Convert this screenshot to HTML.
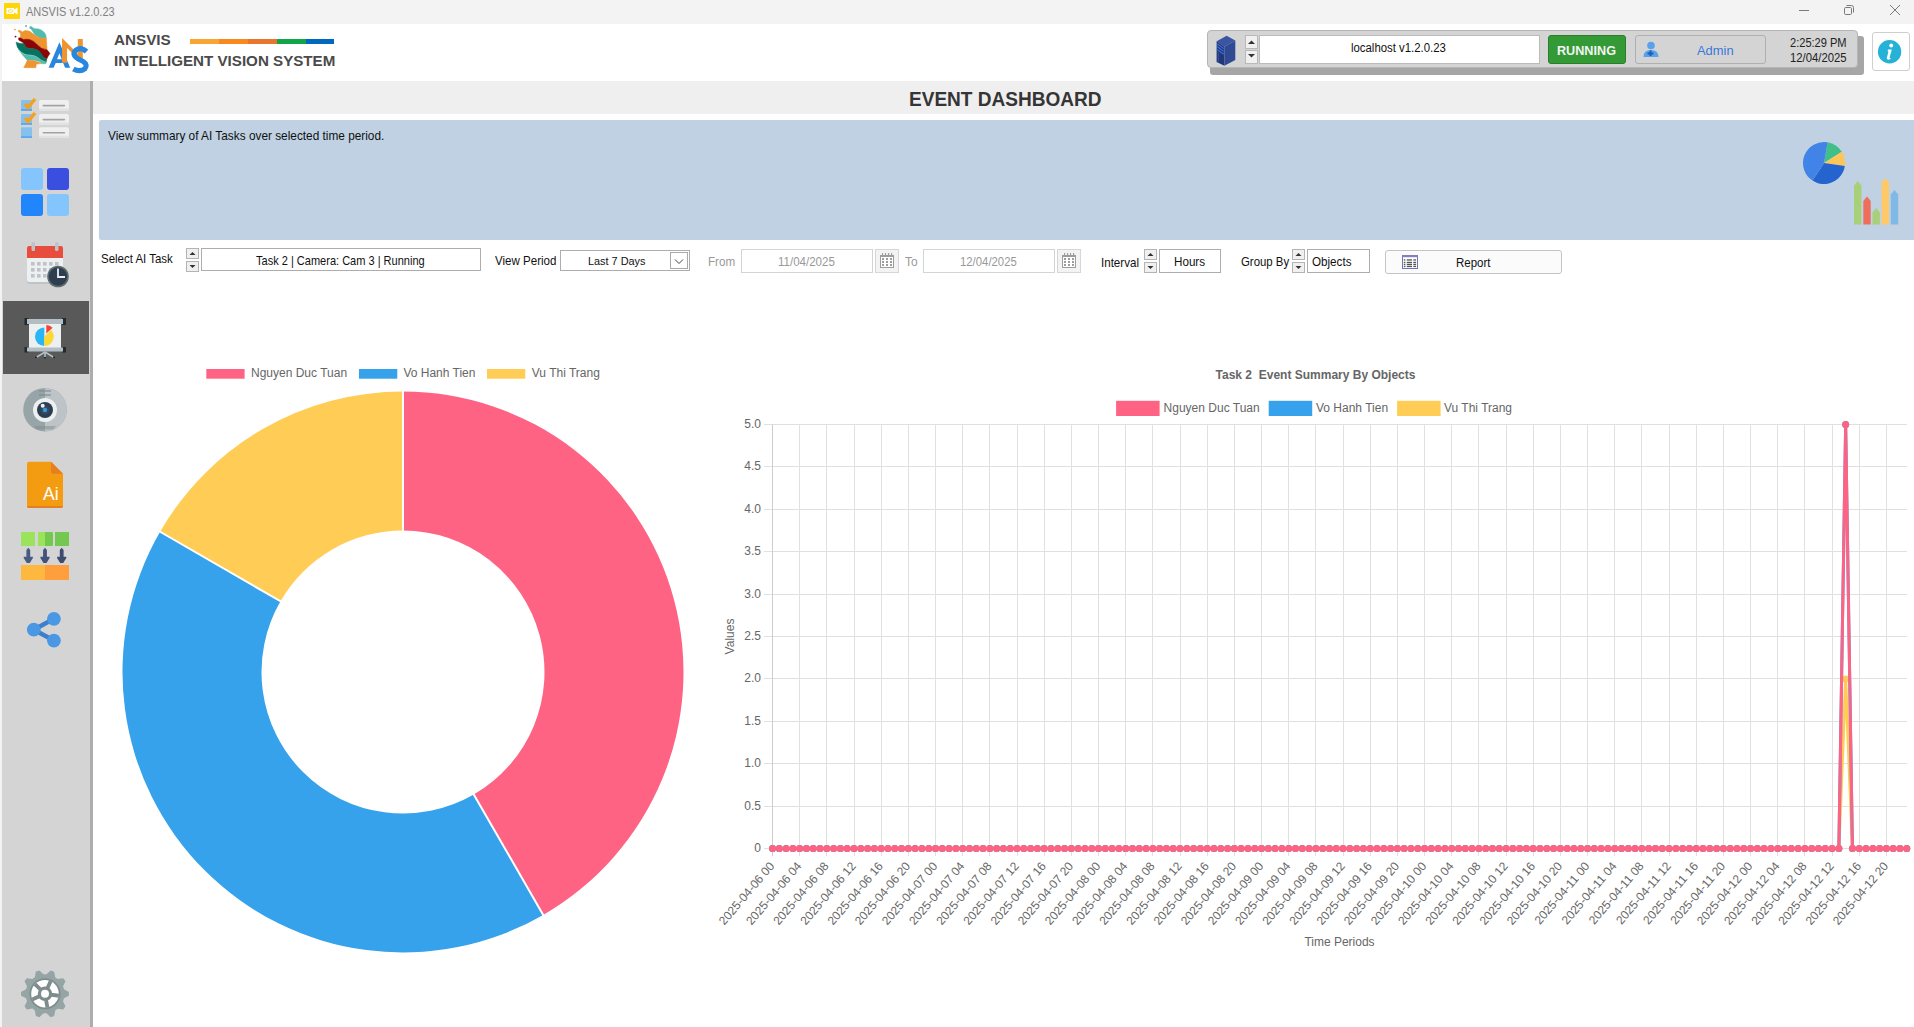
<!DOCTYPE html><html><head><meta charset="utf-8"><style>
html,body{margin:0;padding:0;width:1914px;height:1027px;overflow:hidden;background:#fff;font-family:"Liberation Sans", sans-serif;}
.a{position:absolute;}
.t{position:absolute;white-space:nowrap;line-height:1;}
</style></head><body>
<div class="a" style="left:0;top:0;width:1914px;height:1027px;background:#f3f3f3"></div>
<div class="a" style="left:4px;top:3px;width:16px;height:16px;background:#fdd60a;border-radius:1px"></div>
<svg class="a" style="left:4px;top:3px" width="16" height="16" viewBox="0 0 16 16"><path d="M2.5,5 L10,5 L10,6.5 L13.5,4.5 L13.5,11.5 L10,9.5 L10,11 L2.5,11 Z" fill="#fff"/><ellipse cx="6.5" cy="8" rx="2.5" ry="1.3" fill="none" stroke="#fdd60a" stroke-width="0.8"/></svg>
<div class="t" style="left:26.20px;top:5.94px;font-size:12.94px;color:#808080;transform-origin:0 0;transform:scaleX(0.8498);">ANSVIS v1.2.0.23</div>
<svg class="a" style="left:1790px;top:0" width="124" height="24" viewBox="0 0 124 24">
<line x1="9" y1="10.5" x2="19" y2="10.5" stroke="#7a7a7a" stroke-width="1"/>
<rect x="54.5" y="7.5" width="7" height="7" rx="1.2" fill="none" stroke="#7a7a7a" stroke-width="1"/><path d="M56.5,5.5 H61.5 Q63.5,5.5 63.5,7.5 V12.5" fill="none" stroke="#7a7a7a" stroke-width="1"/>
<path d="M100,5 L110,15 M110,5 L100,15" stroke="#7a7a7a" stroke-width="1"/>
</svg>
<div class="a" style="left:2px;top:24px;width:1912px;height:57px;background:#fff"></div>
<svg class="a" style="left:10px;top:24px" width="85" height="54" viewBox="0 0 1617 1027">
<path d="M380,60 Q420,50 470,90 Q610,80 680,200 L690,270 Q570,290 470,200 Z" fill="#52bbad" stroke="#52bbad" stroke-width="10"/>
<path d="M150,130 Q185,105 235,150 Q330,85 445,190 Q560,290 690,265 L705,485 Q600,470 520,390 Q430,290 300,300 L180,280 Q240,200 150,130 Z" fill="#ee952f" stroke="#ee952f" stroke-width="10"/>
<path d="M165,265 Q200,255 255,295 Q400,265 505,380 Q590,480 705,490 L760,560 L725,615 L700,665 Q620,645 580,560 Q520,460 380,465 Q280,465 260,360 L165,305 Z" fill="#8a0406" stroke="#8a0406" stroke-width="10"/>
<path d="M115,345 Q200,385 262,368 Q300,468 400,472 Q540,462 592,560 Q640,652 700,672 L690,722 Q600,702 540,642 Q470,582 320,582 Q200,542 140,440 Z" fill="#087261" stroke="#087261" stroke-width="10"/>
<path d="M150,470 Q225,555 300,590 Q470,592 540,650 Q600,712 690,722 L680,755 L620,757 Q560,702 480,692 Q380,682 330,692 Q250,610 150,470 Z" fill="#52bbad" stroke="#52bbad" stroke-width="10"/>
<path d="M330,690 Q450,680 605,752 L500,762 L492,830 L262,830 Z" fill="#ee952f" stroke="#ee952f" stroke-width="10"/>
<circle cx="95" cy="105" r="16" fill="#ee952f"/><circle cx="305" cy="38" r="19" fill="#52bbad"/><circle cx="105" cy="240" r="18" fill="#8a0406"/><circle cx="395" cy="70" r="25" fill="#52bbad"/>
<path d="M735,830 L940,345 L1145,830 L1050,830 L1010,740 L870,740 L830,830 Z M895,672 L985,672 L940,555 Z" fill="#2886de" fill-rule="evenodd"/>
<path d="M990,735 L990,265 L1290,565 L1290,285 L1385,285 L1385,660 L1290,660 L1085,455 L1085,735 Z" fill="#ee952f"/>
<path d="M1455,525 Q1350,430 1255,495 Q1165,580 1285,655 L1395,715 Q1485,775 1425,850 Q1330,925 1205,855" fill="none" stroke="#2886de" stroke-width="98"/>
</svg>
<div class="t" style="left:113.70px;top:32.40px;font-size:15.12px;color:#4a4a4a;font-weight:bold;transform-origin:0 0;transform:scaleX(1.0094);">ANSVIS</div>
<div class="t" style="left:113.70px;top:53.47px;font-size:15.26px;color:#4a4a4a;font-weight:bold;transform-origin:0 0;transform:scaleX(0.9932);">INTELLIGENT VISION SYSTEM</div>
<div class="a" style="left:190px;top:39px;width:29px;height:5px;background:#f9a533"></div>
<div class="a" style="left:219px;top:39px;width:29px;height:5px;background:#f7891f"></div>
<div class="a" style="left:248px;top:39px;width:29px;height:5px;background:#e8762e"></div>
<div class="a" style="left:277px;top:39px;width:29px;height:5px;background:#11a64a"></div>
<div class="a" style="left:306px;top:39px;width:28px;height:5px;background:#0069bf"></div>
<div class="a" style="left:1210px;top:36px;width:654px;height:39px;background:#a6a6a6;border-radius:3px"></div>
<div class="a" style="left:1207px;top:30px;width:649px;height:36px;background:#d4d4d4;border:1px solid #b5b5b5;border-radius:4px"></div>
<svg class="a" style="left:1214px;top:34px" width="24" height="34" viewBox="0 0 24 34">
<path d="M12.7,1.8 L21.3,6.5 L10.4,12.7 L2.6,7.3 Z" fill="#3a56a2"/><path d="M2.6,7.3 L10.4,12.7 L10.4,31.8 L2.6,27.9 Z" fill="#213779"/><path d="M10.4,12.7 L21.3,6.5 L21.3,26 L10.4,31.8 Z" fill="#2f4a92"/>
<path d="M3.2,10 L9.8,14.6 M3.2,12.8 L9.8,17.4 M3.2,15.6 L9.8,20.2" stroke="#3f6fe0" stroke-width="1.1"/><path d="M4.3,18 V28" stroke="#3e5aa8" stroke-width="0.8"/>
</svg>
<div class="a" style="left:1245px;top:35px;width:11px;height:12px;background:#f0f0f0;border:1px solid #b9b9b9"></div>
<div class="a" style="left:1245px;top:50px;width:11px;height:12px;background:#f0f0f0;border:1px solid #b9b9b9"></div>
<svg class="a" style="left:1245px;top:35px" width="13" height="29"><path d="M3,9 L6.5,5.5 L10,9 Z" fill="#333"/><path d="M3,19 L6.5,22.5 L10,19 Z" fill="#333"/></svg>
<div class="a" style="left:1259px;top:35px;width:279px;height:27px;background:#fff;border:1px solid #bbb"></div>
<div class="t" style="left:1351.30px;top:40.92px;font-size:13.08px;color:#111;transform-origin:0 0;transform:scaleX(0.8699);">localhost v1.2.0.23</div>
<div class="a" style="left:1548px;top:35px;width:76px;height:27px;background:#339a35;border:1px solid #2a7d2c;border-radius:3px"></div>
<div class="t" style="left:1556.60px;top:44.23px;font-size:13.66px;color:#f4f4f4;font-weight:bold;transform-origin:0 0;transform:scaleX(0.9252);">RUNNING</div>
<div class="a" style="left:1635px;top:35px;width:129px;height:27px;background:#d4d4d4;border:1px solid #b0b0b0;border-radius:3px"></div>
<svg class="a" style="left:1642px;top:41px" width="18" height="17" viewBox="0 0 18 17"><circle cx="9" cy="4.5" r="3.8" fill="#5aa0ec"/><path d="M1.5,16 Q1.5,9 9,9 Q16.5,9 16.5,16 Z" fill="#5aa0ec"/><path d="M5.5,12.5 H11.5 M8.5,9.5 V15" stroke="#1a5fb4" stroke-width="2"/></svg>
<div class="t" style="left:1697.20px;top:43.93px;font-size:13.66px;color:#3a78d8;transform-origin:0 0;transform:scaleX(0.9449);">Admin</div>
<div class="t" style="left:1790.00px;top:37.19px;font-size:12.65px;color:#222;transform-origin:0 0;transform:scaleX(0.8751);">2:25:29 PM</div>
<div class="t" style="left:1790.00px;top:51.77px;font-size:12.79px;color:#222;transform-origin:0 0;transform:scaleX(0.8841);">12/04/2025</div>
<div class="a" style="left:1872px;top:32px;width:36px;height:37px;background:#fff;border:1px solid #cfcfcf;border-radius:3px"></div>
<svg class="a" style="left:1877px;top:39px" width="26" height="26" viewBox="0 0 26 26"><circle cx="12.6" cy="12.8" r="11.7" fill="#26b1d6"/><circle cx="14.2" cy="6.5" r="1.9" fill="#fff"/><path d="M11,10.5 L14.8,10.5 L12.6,18.5 Q12.4,19.6 13.6,19 L14.2,19 Q12.5,21.3 10.6,20.6 Q9.4,20 9.9,18.4 L11.5,12.4 L10.6,12.2 Z" fill="#fff"/></svg>
<div class="a" style="left:2px;top:81px;width:88px;height:946px;background:#d4d4d4"></div>
<div class="a" style="left:90px;top:81px;width:3px;height:946px;background:#adadad"></div>
<div class="a" style="left:3px;top:301px;width:86px;height:73px;background:#595959"></div>
<svg class="a" style="left:0;top:81px" width="90" height="946" viewBox="0 81 90 946"><rect x="21" y="100" width="11" height="10.8" rx="1" fill="#85c1ef"/><rect x="21" y="109" width="11" height="1.8" fill="#5ca7ea"/><rect x="39" y="100" width="30" height="10.8" rx="2" fill="#efefef"/><rect x="39" y="108.5" width="30" height="2.3" fill="#e2e2e2"/><rect x="42.5" y="104.8" width="22.7" height="1.6" rx="0.8" fill="#a3a3a3"/><path d="M25,104 L28.2,107.4 L35,99" fill="none" stroke="#f5a11d" stroke-width="3.4" stroke-linejoin="miter"/><rect x="21" y="114" width="11" height="10.8" rx="1" fill="#85c1ef"/><rect x="21" y="123" width="11" height="1.8" fill="#5ca7ea"/><rect x="39" y="114" width="30" height="10.8" rx="2" fill="#efefef"/><rect x="39" y="122.5" width="30" height="2.3" fill="#e2e2e2"/><rect x="42.5" y="118.8" width="22.7" height="1.6" rx="0.8" fill="#a3a3a3"/><path d="M25,118 L28.2,121.4 L35,113" fill="none" stroke="#f5a11d" stroke-width="3.4" stroke-linejoin="miter"/><rect x="21" y="127.2" width="11" height="10.8" rx="1" fill="#85c1ef"/><rect x="21" y="136.2" width="11" height="1.8" fill="#5ca7ea"/><rect x="39" y="127.2" width="30" height="10.8" rx="2" fill="#efefef"/><rect x="39" y="135.7" width="30" height="2.3" fill="#e2e2e2"/><rect x="42.5" y="132.0" width="22.7" height="1.6" rx="0.8" fill="#a3a3a3"/><rect x="21" y="168" width="22" height="22" rx="3" fill="#84c5fd"/><rect x="47" y="168" width="22" height="22" rx="3" fill="#3a4fe0"/><rect x="21" y="194" width="22" height="22" rx="3" fill="#2185fc"/><rect x="47" y="194" width="22" height="22" rx="3" fill="#84c5fd"/><rect x="27" y="246" width="36" height="38" rx="2" fill="#bdc3c7"/><rect x="27" y="246" width="36" height="36" rx="2" fill="#ecf0f1"/><path d="M27,258 V248 Q27,246 29,246 H61 Q63,246 63,248 V258 Z" fill="#e74c3c"/><rect x="31.5" y="242" width="3.5" height="9" rx="1.5" fill="#bdc3c7"/><rect x="55" y="242" width="3.5" height="9" rx="1.5" fill="#bdc3c7"/><rect x="31" y="262" width="3.6" height="3.6" fill="#bdc3c7"/><rect x="37" y="262" width="3.6" height="3.6" fill="#bdc3c7"/><rect x="43" y="262" width="3.6" height="3.6" fill="#bdc3c7"/><rect x="49" y="262" width="3.6" height="3.6" fill="#bdc3c7"/><rect x="55" y="262" width="3.6" height="3.6" fill="#bdc3c7"/><rect x="31" y="268" width="3.6" height="3.6" fill="#bdc3c7"/><rect x="37" y="268" width="3.6" height="3.6" fill="#bdc3c7"/><rect x="43" y="268" width="3.6" height="3.6" fill="#bdc3c7"/><rect x="49" y="268" width="3.6" height="3.6" fill="#bdc3c7"/><rect x="55" y="268" width="3.6" height="3.6" fill="#bdc3c7"/><rect x="31" y="274" width="3.6" height="3.6" fill="#bdc3c7"/><rect x="37" y="274" width="3.6" height="3.6" fill="#bdc3c7"/><rect x="43" y="274" width="3.6" height="3.6" fill="#bdc3c7"/><rect x="49" y="274" width="3.6" height="3.6" fill="#bdc3c7"/><rect x="55" y="274" width="3.6" height="3.6" fill="#bdc3c7"/><circle cx="58" cy="276.5" r="10.8" fill="#5f6b6e"/><circle cx="58" cy="276.5" r="9.2" fill="#2c3e50"/><path d="M58,268.5 V277 H65" fill="none" stroke="#ecf0f1" stroke-width="1.8"/><rect x="24.5" y="318" width="4" height="7" fill="#1f2a33"/><rect x="62" y="318" width="4" height="7" fill="#1f2a33"/><rect x="24.5" y="347" width="4" height="5.5" fill="#1f2a33"/><rect x="62" y="347" width="4" height="5.5" fill="#1f2a33"/><rect x="29" y="324" width="32" height="24" fill="#ecf0f1"/><rect x="27" y="319" width="36" height="5" fill="#b2bec4"/><rect x="27" y="347.5" width="36" height="4" fill="#b2bec4"/><path d="M45,352 L45,358 M45,352 L36,357.5 M45,352 L54,357.5" stroke="#b2bec4" stroke-width="1.6"/><rect x="35" y="356.5" width="2" height="1.6" fill="#1f2a33"/><rect x="53" y="356.5" width="2" height="1.6" fill="#1f2a33"/><rect x="44" y="357" width="2" height="1.4" fill="#1f2a33"/><path d="M44.3,327.4 A9.3,9.3 0 0 0 44.3,346 Z" fill="#29b6f6"/><path d="M44.3,336.7 L50.9,330.1 A9.3,9.3 0 0 1 44.3,346 Z" fill="#fdd835"/><path d="M46.3,333.5 L46.3,325 A9.3,9.3 0 0 1 52.6,327.7 Z" fill="#f44336"/><circle cx="45" cy="409.7" r="21.8" fill="#98a5a8"/><path d="M45,387.9 A21.8,21.8 0 0 1 45,431.5 Z" fill="#bdc3c7"/><rect x="39" y="390" width="12" height="1.9" fill="#7f8c8d" opacity="0.6"/><rect x="39" y="394" width="12" height="1.9" fill="#7f8c8d" opacity="0.6"/><path d="M34,426 H56 L53,429.5 H37 Z" fill="#7f8c8d" opacity="0.5"/><circle cx="45" cy="410" r="12" fill="#ecf0f1"/><circle cx="45" cy="410" r="8" fill="#2c3e50"/><circle cx="45" cy="410" r="4.5" fill="#34495e"/><circle cx="45" cy="410" r="2.2" fill="#3498db"/><circle cx="42.7" cy="405.7" r="2" fill="#ecf0f1"/><path d="M29,461.7 H51 L63,473.7 V506 Q63,508 61,508 H29 Q27,508 27,506 V463.7 Q27,461.7 29,461.7 Z" fill="#f39c12"/><path d="M27,506 H63 Q63,508 61,508 H29 Q27,508 27,506 Z" fill="#e67e22"/><path d="M51,461.7 L63,473.7 H53 Q51,473.7 51,471.7 Z" fill="#e67e22"/><text x="43" y="499.6" font-family="Liberation Sans" font-size="17.5" fill="#fff">Ai</text><rect x="21" y="532" width="14" height="14" fill="#9be35a"/><rect x="38" y="532" width="15" height="14" fill="#9be35a"/><path d="M45,532 H51 Q53,532 53,534 V544 Q53,546 51,546 H45 Z" fill="#74c850"/><rect x="55" y="532" width="14" height="14" fill="#74c850"/><path d="M26.400000000000002,550 L28.3,547.8 L30.2,550 V556.8 H32.9 V558 L29.8,563 H26.8 L23.700000000000003,558 V556.8 H26.400000000000002 Z" fill="#4a5b80"/><path d="M43.1,550 L45,547.8 L46.9,550 V556.8 H49.6 V558 L46.5,563 H43.5 L40.4,558 V556.8 H43.1 Z" fill="#44527a"/><path d="M59.800000000000004,550 L61.7,547.8 L63.6,550 V556.8 H66.3 V558 L63.2,563 H60.2 L57.1,558 V556.8 H59.800000000000004 Z" fill="#3f4a70"/><rect x="21" y="565" width="24" height="15" fill="#ffb83f"/><rect x="45" y="565" width="24" height="15" fill="#ff9e3d"/><path d="M53.9,618.8 L33.8,629.7 L53.9,640.6" fill="none" stroke="#3c80cc" stroke-width="4.5"/><circle cx="53.9" cy="618.8" r="6.9" fill="#4a98e3"/><circle cx="33.8" cy="629.7" r="6.9" fill="#4a98e3"/><circle cx="53.9" cy="640.6" r="6.9" fill="#4a98e3"/><polygon points="45.00,969.80 48.75,970.10 51.03,975.25 53.85,976.43 59.11,974.38 61.97,976.83 60.78,982.34 62.37,984.95 67.83,986.38 68.70,990.05 64.50,993.80 64.26,996.85 67.83,1001.22 66.38,1004.70 60.78,1005.26 58.79,1007.59 59.11,1013.22 55.90,1015.18 51.03,1012.35 48.05,1013.06 45.00,1017.80 41.25,1017.50 38.97,1012.35 36.15,1011.17 30.89,1013.22 28.03,1010.77 29.22,1005.26 27.63,1002.65 22.17,1001.22 21.30,997.55 25.50,993.80 25.74,990.75 22.17,986.38 23.62,982.90 29.22,982.34 31.21,980.01 30.89,974.38 34.10,972.42 38.97,975.25 41.95,974.54" fill="#95a5a6" transform="rotate(13.5 45 993.8)"/><circle cx="45" cy="993.8" r="15.5" fill="#7f8c8d"/><circle cx="45" cy="993.8" r="13.8" fill="#fff"/><g stroke="#7f8c8d" stroke-width="3.8"><line x1="45" y1="993.8" x2="50.69" y2="981.01"/><line x1="45" y1="993.8" x2="58.86" y2="995.75"/><line x1="45" y1="993.8" x2="47.43" y2="1007.59"/><line x1="45" y1="993.8" x2="32.21" y2="999.49"/><line x1="45" y1="993.8" x2="34.93" y2="984.07"/></g><circle cx="45" cy="993.8" r="7.2" fill="#7f8c8d"/><circle cx="45" cy="993.8" r="4" fill="#fff"/></svg><div class="a" style="left:93px;top:81px;width:1821px;height:33px;background:#efefef"></div>
<div class="t" style="left:908.70px;top:89.30px;font-size:20.78px;color:#353535;font-weight:bold;transform-origin:0 0;transform:scaleX(0.9168);">EVENT DASHBOARD</div>
<div class="a" style="left:93px;top:114px;width:1821px;height:913px;background:#fff"></div>
<div class="a" style="left:99px;top:120px;width:1815px;height:120px;background:#bfd1e3;border-radius:2px 0 0 2px"></div>
<div class="t" style="left:108.20px;top:129.94px;font-size:12.94px;color:#111;transform-origin:0 0;transform:scaleX(0.9142);">View summary of AI Tasks over selected time period.</div>
<div class="t" style="left:101.00px;top:251.97px;font-size:13.37px;color:#111;transform-origin:0 0;transform:scaleX(0.8582);">Select AI Task</div><div class="a" style="left:186px;top:248px;width:11px;height:9px;background:#f0f0f0;border:1px solid #b4b4b4"></div><div class="a" style="left:186px;top:261px;width:11px;height:9px;background:#f0f0f0;border:1px solid #b4b4b4"></div><svg class="a" style="left:186px;top:248px" width="13" height="24"><path d="M3.5,7 L6.5,4 L9.5,7 Z" fill="#333"/><path d="M3.5,17 L6.5,20 L9.5,17 Z" fill="#333"/></svg><div class="a" style="left:201px;top:248px;width:278px;height:21px;background:#fff;border:1px solid #adadad"></div><div class="t" style="left:255.70px;top:254.88px;font-size:12.06px;color:#111;transform-origin:0 0;transform:scaleX(0.9148);">Task 2 | Camera: Cam 3 | Running</div><div class="t" style="left:494.90px;top:255.24px;font-size:12.35px;color:#111;transform-origin:0 0;transform:scaleX(0.9361);">View Period</div><div class="a" style="left:560px;top:250px;width:128px;height:19px;background:#fff;border:1px solid #adadad"></div><div class="t" style="left:587.50px;top:254.85px;font-size:11.63px;color:#111;transform-origin:0 0;transform:scaleX(0.9366);">Last 7 Days</div><div class="a" style="left:670px;top:252px;width:16px;height:15px;background:#fff;border:1px solid #aaa"></div><svg class="a" style="left:671px;top:253px" width="16" height="16"><path d="M4,6.5 L8,10.5 L12,6.5" fill="none" stroke="#444" stroke-width="1"/></svg><div class="t" style="left:708.20px;top:254.92px;font-size:13.08px;color:#999;transform-origin:0 0;transform:scaleX(0.8914);">From</div><div class="a" style="left:741px;top:249px;width:130px;height:22px;background:#fff;border:1px solid #d4d4d4"></div><div class="t" style="left:777.80px;top:254.92px;font-size:13.08px;color:#999;transform-origin:0 0;transform:scaleX(0.8807);">11/04/2025</div><div class="a" style="left:875px;top:249px;width:22px;height:22px;background:#f3f3f3;border:1px solid #d6d6d6"></div><svg class="a" style="left:880px;top:253px" width="15" height="16" viewBox="0 0 15 16"><rect x="0.5" y="2.5" width="13" height="12" fill="#fff" stroke="#9c9c9c"/><rect x="0" y="2" width="14" height="2" fill="#9c9c9c"/><rect x="2" y="0" width="1.1" height="2.5" fill="#9c9c9c"/><rect x="5" y="0" width="1.1" height="2.5" fill="#9c9c9c"/><rect x="8" y="0" width="1.1" height="2.5" fill="#9c9c9c"/><rect x="11" y="0" width="1.1" height="2.5" fill="#9c9c9c"/><rect x="2" y="5" width="2" height="2" fill="#9c9c9c"/><rect x="6" y="5" width="2" height="2" fill="#9c9c9c"/><rect x="10" y="5" width="2" height="2" fill="#9c9c9c"/><rect x="2" y="8" width="2" height="2" fill="#9c9c9c"/><rect x="6" y="8" width="2" height="2" fill="#9c9c9c"/><rect x="10" y="8" width="2" height="2" fill="#9c9c9c"/><rect x="2" y="11" width="2" height="2" fill="#9c9c9c"/><rect x="6" y="11" width="2" height="2" fill="#9c9c9c"/><rect x="10" y="11" width="2" height="2" fill="#9c9c9c"/></svg><div class="t" style="left:904.90px;top:255.61px;font-size:12.50px;color:#999;transform-origin:0 0;transform:scaleX(0.9555);">To</div><div class="a" style="left:923px;top:249px;width:130px;height:22px;background:#fff;border:1px solid #d4d4d4"></div><div class="t" style="left:959.80px;top:254.92px;font-size:13.08px;color:#999;transform-origin:0 0;transform:scaleX(0.8675);">12/04/2025</div><div class="a" style="left:1057px;top:249px;width:22px;height:22px;background:#f3f3f3;border:1px solid #d6d6d6"></div><svg class="a" style="left:1062px;top:253px" width="15" height="16" viewBox="0 0 15 16"><rect x="0.5" y="2.5" width="13" height="12" fill="#fff" stroke="#9c9c9c"/><rect x="0" y="2" width="14" height="2" fill="#9c9c9c"/><rect x="2" y="0" width="1.1" height="2.5" fill="#9c9c9c"/><rect x="5" y="0" width="1.1" height="2.5" fill="#9c9c9c"/><rect x="8" y="0" width="1.1" height="2.5" fill="#9c9c9c"/><rect x="11" y="0" width="1.1" height="2.5" fill="#9c9c9c"/><rect x="2" y="5" width="2" height="2" fill="#9c9c9c"/><rect x="6" y="5" width="2" height="2" fill="#9c9c9c"/><rect x="10" y="5" width="2" height="2" fill="#9c9c9c"/><rect x="2" y="8" width="2" height="2" fill="#9c9c9c"/><rect x="6" y="8" width="2" height="2" fill="#9c9c9c"/><rect x="10" y="8" width="2" height="2" fill="#9c9c9c"/><rect x="2" y="11" width="2" height="2" fill="#9c9c9c"/><rect x="6" y="11" width="2" height="2" fill="#9c9c9c"/><rect x="10" y="11" width="2" height="2" fill="#9c9c9c"/></svg><div class="t" style="left:1100.60px;top:255.77px;font-size:13.37px;color:#111;transform-origin:0 0;transform:scaleX(0.8664);">Interval</div><div class="a" style="left:1144px;top:249px;width:11px;height:9px;background:#f0f0f0;border:1px solid #b4b4b4"></div><div class="a" style="left:1144px;top:262px;width:11px;height:9px;background:#f0f0f0;border:1px solid #b4b4b4"></div><svg class="a" style="left:1144px;top:249px" width="13" height="24"><path d="M3.5,7 L6.5,4 L9.5,7 Z" fill="#333"/><path d="M3.5,17 L6.5,20 L9.5,17 Z" fill="#333"/></svg><div class="a" style="left:1159px;top:249px;width:60px;height:22px;background:#fff;border:1px solid #adadad"></div><div class="t" style="left:1173.60px;top:256.27px;font-size:12.79px;color:#111;transform-origin:0 0;transform:scaleX(0.9115);">Hours</div><div class="t" style="left:1240.60px;top:254.77px;font-size:13.37px;color:#111;transform-origin:0 0;transform:scaleX(0.8531);">Group By</div><div class="a" style="left:1292px;top:249px;width:11px;height:9px;background:#f0f0f0;border:1px solid #b4b4b4"></div><div class="a" style="left:1292px;top:262px;width:11px;height:9px;background:#f0f0f0;border:1px solid #b4b4b4"></div><svg class="a" style="left:1292px;top:249px" width="13" height="24"><path d="M3.5,7 L6.5,4 L9.5,7 Z" fill="#333"/><path d="M3.5,17 L6.5,20 L9.5,17 Z" fill="#333"/></svg><div class="a" style="left:1307px;top:249px;width:61px;height:22px;background:#fff;border:1px solid #adadad"></div><div class="t" style="left:1311.50px;top:256.27px;font-size:12.79px;color:#111;transform-origin:0 0;transform:scaleX(0.9110);">Objects</div><div class="a" style="left:1385px;top:250px;width:175px;height:22px;background:#fbfbfb;border:1px solid #c4c4c4;border-radius:3px"></div><svg class="a" style="left:1402px;top:255px" width="16" height="14" viewBox="0 0 16 14"><rect x="0.5" y="0.5" width="15" height="13" fill="#fff" stroke="#7474b4"/><rect x="0" y="0" width="16" height="2.2" fill="#8080c0"/><rect x="1.8" y="4.3" width="1.6" height="1.3" fill="#555"/><rect x="4.8" y="4.3" width="5.2" height="1.3" fill="#555"/><rect x="11.3" y="4.3" width="2.8" height="1.3" fill="#555"/><rect x="1.8" y="6.8" width="1.6" height="1.3" fill="#555"/><rect x="4.8" y="6.8" width="5.2" height="1.3" fill="#555"/><rect x="11.3" y="6.8" width="2.8" height="1.3" fill="#555"/><rect x="1.8" y="8.8" width="1.6" height="1.3" fill="#555"/><rect x="4.8" y="8.8" width="5.2" height="1.3" fill="#555"/><rect x="11.3" y="8.8" width="2.8" height="1.3" fill="#555"/><rect x="1.8" y="10.8" width="1.6" height="1.3" fill="#555"/><rect x="4.8" y="10.8" width="5.2" height="1.3" fill="#555"/><rect x="11.3" y="10.8" width="2.8" height="1.3" fill="#555"/></svg><div class="t" style="left:1455.50px;top:257.44px;font-size:12.35px;color:#111;transform-origin:0 0;transform:scaleX(0.9300);">Report</div><svg class="a" style="left:1790px;top:130px" width="124" height="105" viewBox="1790 130 124 105"><path d="M1824,163 L1827.65,142.32 A21,21 0 0 1 1841.81,151.87 Z" fill="#40c088"/><path d="M1824,163 L1841.81,151.87 A21,21 0 0 1 1844.80,165.92 Z" fill="#fec65a"/><path d="M1824,163 L1844.80,165.92 A21,21 0 0 1 1812.56,180.61 Z" fill="#2563cf"/><path d="M1824,163 L1812.56,180.61 A21,21 0 0 1 1827.65,142.32 Z" fill="#4283e8"/><path d="M1854,224.5 V185.5 L1857.7,181 L1861.4,185.5 V224.5 Z" fill="#a8d07a"/><path d="M1863.3,224.5 V201.0 L1867.0,196.5 L1870.7,201.0 V224.5 Z" fill="#ee6e5e"/><path d="M1872.5,224.5 V212.5 L1876.2,208 L1879.9,212.5 V224.5 Z" fill="#a8d07a"/><path d="M1881.6,224.5 V182.5 L1885.3,178 L1889.0,182.5 V224.5 Z" fill="#fec966"/><path d="M1890.8,224.5 V194.5 L1894.5,190 L1898.2,194.5 V224.5 Z" fill="#80b8e6"/></svg><svg class="a" style="left:93px;top:340px" width="620" height="640" viewBox="93 340 620 640"><path d="M403.00,391.50 A280.5,280.5 0 0 1 543.25,914.92 L473.75,794.54 A141.5,141.5 0 0 0 403.00,530.50 Z" fill="#ff6384"/><path d="M543.25,914.92 A280.5,280.5 0 0 1 160.08,531.75 L280.46,601.25 A141.5,141.5 0 0 0 473.75,794.54 Z" fill="#36a2eb"/><path d="M160.08,531.75 A280.5,280.5 0 0 1 403.00,391.50 L403.00,530.50 A141.5,141.5 0 0 0 280.46,601.25 Z" fill="#ffcd56"/><line x1="403.00" y1="532.50" x2="403.00" y2="389.50" stroke="#fff" stroke-width="2"/><line x1="472.75" y1="792.81" x2="544.25" y2="916.65" stroke="#fff" stroke-width="2"/><line x1="282.19" y1="602.25" x2="158.35" y2="530.75" stroke="#fff" stroke-width="2"/><rect x="206.3" y="369" width="38.3" height="9.7" fill="#ff6384"/><text x="251" y="377" font-family="Liberation Sans" font-size="12" fill="#666">Nguyen Duc Tuan</text><rect x="359" y="369" width="38.3" height="9.7" fill="#36a2eb"/><text x="403.4" y="377" font-family="Liberation Sans" font-size="12" fill="#666">Vo Hanh Tien</text><rect x="487" y="369" width="38.3" height="9.7" fill="#ffcd56"/><text x="531.8" y="377" font-family="Liberation Sans" font-size="12" fill="#666">Vu Thi Trang</text></svg><svg class="a" style="left:700px;top:340px" width="1214" height="640" viewBox="700 340 1214 640"><text x="1315.5" y="378.7" font-family="Liberation Sans" font-size="12" font-weight="bold" fill="#666" text-anchor="middle" style="white-space:pre">Task 2  Event Summary By Objects</text><rect x="1116.1" y="400.8" width="43.5" height="15.2" fill="#ff6384"/><text x="1163.6" y="411.7" font-family="Liberation Sans" font-size="12" fill="#666">Nguyen Duc Tuan</text><rect x="1268.7" y="400.8" width="43.5" height="15.2" fill="#36a2eb"/><text x="1316" y="411.7" font-family="Liberation Sans" font-size="12" fill="#666">Vo Hanh Tien</text><rect x="1397.1" y="400.8" width="43.5" height="15.2" fill="#ffcd56"/><text x="1444" y="411.7" font-family="Liberation Sans" font-size="12" fill="#666">Vu Thi Trang</text><path d="M764,848.50 H1907 M764,806.50 H1907 M764,763.50 H1907 M764,721.50 H1907 M764,678.50 H1907 M764,636.50 H1907 M764,594.50 H1907 M764,551.50 H1907 M764,509.50 H1907 M764,466.50 H1907 M764,424.50 H1907" stroke="#e0e0e0" stroke-width="1" fill="none"/><path d="M799.50,424.5 V856 M826.50,424.5 V856 M854.50,424.5 V856 M881.50,424.5 V856 M908.50,424.5 V856 M935.50,424.5 V856 M962.50,424.5 V856 M989.50,424.5 V856 M1017.50,424.5 V856 M1044.50,424.5 V856 M1071.50,424.5 V856 M1098.50,424.5 V856 M1125.50,424.5 V856 M1152.50,424.5 V856 M1180.50,424.5 V856 M1207.50,424.5 V856 M1234.50,424.5 V856 M1261.50,424.5 V856 M1288.50,424.5 V856 M1315.50,424.5 V856 M1343.50,424.5 V856 M1370.50,424.5 V856 M1397.50,424.5 V856 M1424.50,424.5 V856 M1451.50,424.5 V856 M1478.50,424.5 V856 M1506.50,424.5 V856 M1533.50,424.5 V856 M1560.50,424.5 V856 M1587.50,424.5 V856 M1614.50,424.5 V856 M1641.50,424.5 V856 M1669.50,424.5 V856 M1696.50,424.5 V856 M1723.50,424.5 V856 M1750.50,424.5 V856 M1777.50,424.5 V856 M1804.50,424.5 V856 M1832.50,424.5 V856 M1859.50,424.5 V856 M1886.50,424.5 V856" stroke="#e0e0e0" stroke-width="1" fill="none"/><path d="M772.5,424.5 V856" stroke="#cdcdcd" stroke-width="1" fill="none"/><text x="761" y="851.90" font-family="Liberation Sans" font-size="12" fill="#666" text-anchor="end">0</text><text x="761" y="809.50" font-family="Liberation Sans" font-size="12" fill="#666" text-anchor="end">0.5</text><text x="761" y="767.10" font-family="Liberation Sans" font-size="12" fill="#666" text-anchor="end">1.0</text><text x="761" y="724.70" font-family="Liberation Sans" font-size="12" fill="#666" text-anchor="end">1.5</text><text x="761" y="682.30" font-family="Liberation Sans" font-size="12" fill="#666" text-anchor="end">2.0</text><text x="761" y="639.90" font-family="Liberation Sans" font-size="12" fill="#666" text-anchor="end">2.5</text><text x="761" y="597.50" font-family="Liberation Sans" font-size="12" fill="#666" text-anchor="end">3.0</text><text x="761" y="555.10" font-family="Liberation Sans" font-size="12" fill="#666" text-anchor="end">3.5</text><text x="761" y="512.70" font-family="Liberation Sans" font-size="12" fill="#666" text-anchor="end">4.0</text><text x="761" y="470.30" font-family="Liberation Sans" font-size="12" fill="#666" text-anchor="end">4.5</text><text x="761" y="427.90" font-family="Liberation Sans" font-size="12" fill="#666" text-anchor="end">5.0</text><text transform="translate(734,636.5) rotate(-90)" font-family="Liberation Sans" font-size="12" fill="#666" text-anchor="middle">Values</text><text transform="translate(772.60,864.4) rotate(-49.5)" font-family="Liberation Sans" font-size="12" fill="#666" text-anchor="end" dominant-baseline="middle">2025-04-06 00</text><text transform="translate(799.77,864.4) rotate(-49.5)" font-family="Liberation Sans" font-size="12" fill="#666" text-anchor="end" dominant-baseline="middle">2025-04-06 04</text><text transform="translate(826.94,864.4) rotate(-49.5)" font-family="Liberation Sans" font-size="12" fill="#666" text-anchor="end" dominant-baseline="middle">2025-04-06 08</text><text transform="translate(854.10,864.4) rotate(-49.5)" font-family="Liberation Sans" font-size="12" fill="#666" text-anchor="end" dominant-baseline="middle">2025-04-06 12</text><text transform="translate(881.27,864.4) rotate(-49.5)" font-family="Liberation Sans" font-size="12" fill="#666" text-anchor="end" dominant-baseline="middle">2025-04-06 16</text><text transform="translate(908.44,864.4) rotate(-49.5)" font-family="Liberation Sans" font-size="12" fill="#666" text-anchor="end" dominant-baseline="middle">2025-04-06 20</text><text transform="translate(935.61,864.4) rotate(-49.5)" font-family="Liberation Sans" font-size="12" fill="#666" text-anchor="end" dominant-baseline="middle">2025-04-07 00</text><text transform="translate(962.78,864.4) rotate(-49.5)" font-family="Liberation Sans" font-size="12" fill="#666" text-anchor="end" dominant-baseline="middle">2025-04-07 04</text><text transform="translate(989.95,864.4) rotate(-49.5)" font-family="Liberation Sans" font-size="12" fill="#666" text-anchor="end" dominant-baseline="middle">2025-04-07 08</text><text transform="translate(1017.11,864.4) rotate(-49.5)" font-family="Liberation Sans" font-size="12" fill="#666" text-anchor="end" dominant-baseline="middle">2025-04-07 12</text><text transform="translate(1044.28,864.4) rotate(-49.5)" font-family="Liberation Sans" font-size="12" fill="#666" text-anchor="end" dominant-baseline="middle">2025-04-07 16</text><text transform="translate(1071.45,864.4) rotate(-49.5)" font-family="Liberation Sans" font-size="12" fill="#666" text-anchor="end" dominant-baseline="middle">2025-04-07 20</text><text transform="translate(1098.62,864.4) rotate(-49.5)" font-family="Liberation Sans" font-size="12" fill="#666" text-anchor="end" dominant-baseline="middle">2025-04-08 00</text><text transform="translate(1125.79,864.4) rotate(-49.5)" font-family="Liberation Sans" font-size="12" fill="#666" text-anchor="end" dominant-baseline="middle">2025-04-08 04</text><text transform="translate(1152.96,864.4) rotate(-49.5)" font-family="Liberation Sans" font-size="12" fill="#666" text-anchor="end" dominant-baseline="middle">2025-04-08 08</text><text transform="translate(1180.12,864.4) rotate(-49.5)" font-family="Liberation Sans" font-size="12" fill="#666" text-anchor="end" dominant-baseline="middle">2025-04-08 12</text><text transform="translate(1207.29,864.4) rotate(-49.5)" font-family="Liberation Sans" font-size="12" fill="#666" text-anchor="end" dominant-baseline="middle">2025-04-08 16</text><text transform="translate(1234.46,864.4) rotate(-49.5)" font-family="Liberation Sans" font-size="12" fill="#666" text-anchor="end" dominant-baseline="middle">2025-04-08 20</text><text transform="translate(1261.63,864.4) rotate(-49.5)" font-family="Liberation Sans" font-size="12" fill="#666" text-anchor="end" dominant-baseline="middle">2025-04-09 00</text><text transform="translate(1288.80,864.4) rotate(-49.5)" font-family="Liberation Sans" font-size="12" fill="#666" text-anchor="end" dominant-baseline="middle">2025-04-09 04</text><text transform="translate(1315.97,864.4) rotate(-49.5)" font-family="Liberation Sans" font-size="12" fill="#666" text-anchor="end" dominant-baseline="middle">2025-04-09 08</text><text transform="translate(1343.13,864.4) rotate(-49.5)" font-family="Liberation Sans" font-size="12" fill="#666" text-anchor="end" dominant-baseline="middle">2025-04-09 12</text><text transform="translate(1370.30,864.4) rotate(-49.5)" font-family="Liberation Sans" font-size="12" fill="#666" text-anchor="end" dominant-baseline="middle">2025-04-09 16</text><text transform="translate(1397.47,864.4) rotate(-49.5)" font-family="Liberation Sans" font-size="12" fill="#666" text-anchor="end" dominant-baseline="middle">2025-04-09 20</text><text transform="translate(1424.64,864.4) rotate(-49.5)" font-family="Liberation Sans" font-size="12" fill="#666" text-anchor="end" dominant-baseline="middle">2025-04-10 00</text><text transform="translate(1451.81,864.4) rotate(-49.5)" font-family="Liberation Sans" font-size="12" fill="#666" text-anchor="end" dominant-baseline="middle">2025-04-10 04</text><text transform="translate(1478.98,864.4) rotate(-49.5)" font-family="Liberation Sans" font-size="12" fill="#666" text-anchor="end" dominant-baseline="middle">2025-04-10 08</text><text transform="translate(1506.14,864.4) rotate(-49.5)" font-family="Liberation Sans" font-size="12" fill="#666" text-anchor="end" dominant-baseline="middle">2025-04-10 12</text><text transform="translate(1533.31,864.4) rotate(-49.5)" font-family="Liberation Sans" font-size="12" fill="#666" text-anchor="end" dominant-baseline="middle">2025-04-10 16</text><text transform="translate(1560.48,864.4) rotate(-49.5)" font-family="Liberation Sans" font-size="12" fill="#666" text-anchor="end" dominant-baseline="middle">2025-04-10 20</text><text transform="translate(1587.65,864.4) rotate(-49.5)" font-family="Liberation Sans" font-size="12" fill="#666" text-anchor="end" dominant-baseline="middle">2025-04-11 00</text><text transform="translate(1614.82,864.4) rotate(-49.5)" font-family="Liberation Sans" font-size="12" fill="#666" text-anchor="end" dominant-baseline="middle">2025-04-11 04</text><text transform="translate(1641.99,864.4) rotate(-49.5)" font-family="Liberation Sans" font-size="12" fill="#666" text-anchor="end" dominant-baseline="middle">2025-04-11 08</text><text transform="translate(1669.15,864.4) rotate(-49.5)" font-family="Liberation Sans" font-size="12" fill="#666" text-anchor="end" dominant-baseline="middle">2025-04-11 12</text><text transform="translate(1696.32,864.4) rotate(-49.5)" font-family="Liberation Sans" font-size="12" fill="#666" text-anchor="end" dominant-baseline="middle">2025-04-11 16</text><text transform="translate(1723.49,864.4) rotate(-49.5)" font-family="Liberation Sans" font-size="12" fill="#666" text-anchor="end" dominant-baseline="middle">2025-04-11 20</text><text transform="translate(1750.66,864.4) rotate(-49.5)" font-family="Liberation Sans" font-size="12" fill="#666" text-anchor="end" dominant-baseline="middle">2025-04-12 00</text><text transform="translate(1777.83,864.4) rotate(-49.5)" font-family="Liberation Sans" font-size="12" fill="#666" text-anchor="end" dominant-baseline="middle">2025-04-12 04</text><text transform="translate(1805.00,864.4) rotate(-49.5)" font-family="Liberation Sans" font-size="12" fill="#666" text-anchor="end" dominant-baseline="middle">2025-04-12 08</text><text transform="translate(1832.16,864.4) rotate(-49.5)" font-family="Liberation Sans" font-size="12" fill="#666" text-anchor="end" dominant-baseline="middle">2025-04-12 12</text><text transform="translate(1859.33,864.4) rotate(-49.5)" font-family="Liberation Sans" font-size="12" fill="#666" text-anchor="end" dominant-baseline="middle">2025-04-12 16</text><text transform="translate(1886.50,864.4) rotate(-49.5)" font-family="Liberation Sans" font-size="12" fill="#666" text-anchor="end" dominant-baseline="middle">2025-04-12 20</text><text x="1339.5" y="945.9" font-family="Liberation Sans" font-size="12" fill="#666" text-anchor="middle">Time Periods</text><polyline points="772.50,848.50 779.29,848.50 786.08,848.50 792.88,848.50 799.67,848.50 806.46,848.50 813.25,848.50 820.04,848.50 826.84,848.50 833.63,848.50 840.42,848.50 847.21,848.50 854.00,848.50 860.80,848.50 867.59,848.50 874.38,848.50 881.17,848.50 887.97,848.50 894.76,848.50 901.55,848.50 908.34,848.50 915.13,848.50 921.93,848.50 928.72,848.50 935.51,848.50 942.30,848.50 949.09,848.50 955.89,848.50 962.68,848.50 969.47,848.50 976.26,848.50 983.05,848.50 989.85,848.50 996.64,848.50 1003.43,848.50 1010.22,848.50 1017.01,848.50 1023.81,848.50 1030.60,848.50 1037.39,848.50 1044.18,848.50 1050.97,848.50 1057.77,848.50 1064.56,848.50 1071.35,848.50 1078.14,848.50 1084.94,848.50 1091.73,848.50 1098.52,848.50 1105.31,848.50 1112.10,848.50 1118.90,848.50 1125.69,848.50 1132.48,848.50 1139.27,848.50 1146.06,848.50 1152.86,848.50 1159.65,848.50 1166.44,848.50 1173.23,848.50 1180.02,848.50 1186.82,848.50 1193.61,848.50 1200.40,848.50 1207.19,848.50 1213.98,848.50 1220.78,848.50 1227.57,848.50 1234.36,848.50 1241.15,848.50 1247.95,848.50 1254.74,848.50 1261.53,848.50 1268.32,848.50 1275.11,848.50 1281.91,848.50 1288.70,848.50 1295.49,848.50 1302.28,848.50 1309.07,848.50 1315.87,848.50 1322.66,848.50 1329.45,848.50 1336.24,848.50 1343.03,848.50 1349.83,848.50 1356.62,848.50 1363.41,848.50 1370.20,848.50 1376.99,848.50 1383.79,848.50 1390.58,848.50 1397.37,848.50 1404.16,848.50 1410.95,848.50 1417.75,848.50 1424.54,848.50 1431.33,848.50 1438.12,848.50 1444.92,848.50 1451.71,848.50 1458.50,848.50 1465.29,848.50 1472.08,848.50 1478.88,848.50 1485.67,848.50 1492.46,848.50 1499.25,848.50 1506.04,848.50 1512.84,848.50 1519.63,848.50 1526.42,848.50 1533.21,848.50 1540.00,848.50 1546.80,848.50 1553.59,848.50 1560.38,848.50 1567.17,848.50 1573.96,848.50 1580.76,848.50 1587.55,848.50 1594.34,848.50 1601.13,848.50 1607.93,848.50 1614.72,848.50 1621.51,848.50 1628.30,848.50 1635.09,848.50 1641.89,848.50 1648.68,848.50 1655.47,848.50 1662.26,848.50 1669.05,848.50 1675.85,848.50 1682.64,848.50 1689.43,848.50 1696.22,848.50 1703.01,848.50 1709.81,848.50 1716.60,848.50 1723.39,848.50 1730.18,848.50 1736.97,848.50 1743.77,848.50 1750.56,848.50 1757.35,848.50 1764.14,848.50 1770.93,848.50 1777.73,848.50 1784.52,848.50 1791.31,848.50 1798.10,848.50 1804.90,848.50 1811.69,848.50 1818.48,848.50 1825.27,848.50 1832.06,848.50 1838.86,848.50 1845.65,678.90 1852.44,848.50 1859.23,848.50 1866.02,848.50 1872.82,848.50 1879.61,848.50 1886.40,848.50 1893.19,848.50 1899.98,848.50 1906.78,848.50" fill="none" stroke="#ffcd56" stroke-width="3" stroke-linejoin="miter"/><g fill="#ffcd56"><circle cx="772.50" cy="848.50" r="3.5"/><circle cx="779.29" cy="848.50" r="3.5"/><circle cx="786.08" cy="848.50" r="3.5"/><circle cx="792.88" cy="848.50" r="3.5"/><circle cx="799.67" cy="848.50" r="3.5"/><circle cx="806.46" cy="848.50" r="3.5"/><circle cx="813.25" cy="848.50" r="3.5"/><circle cx="820.04" cy="848.50" r="3.5"/><circle cx="826.84" cy="848.50" r="3.5"/><circle cx="833.63" cy="848.50" r="3.5"/><circle cx="840.42" cy="848.50" r="3.5"/><circle cx="847.21" cy="848.50" r="3.5"/><circle cx="854.00" cy="848.50" r="3.5"/><circle cx="860.80" cy="848.50" r="3.5"/><circle cx="867.59" cy="848.50" r="3.5"/><circle cx="874.38" cy="848.50" r="3.5"/><circle cx="881.17" cy="848.50" r="3.5"/><circle cx="887.97" cy="848.50" r="3.5"/><circle cx="894.76" cy="848.50" r="3.5"/><circle cx="901.55" cy="848.50" r="3.5"/><circle cx="908.34" cy="848.50" r="3.5"/><circle cx="915.13" cy="848.50" r="3.5"/><circle cx="921.93" cy="848.50" r="3.5"/><circle cx="928.72" cy="848.50" r="3.5"/><circle cx="935.51" cy="848.50" r="3.5"/><circle cx="942.30" cy="848.50" r="3.5"/><circle cx="949.09" cy="848.50" r="3.5"/><circle cx="955.89" cy="848.50" r="3.5"/><circle cx="962.68" cy="848.50" r="3.5"/><circle cx="969.47" cy="848.50" r="3.5"/><circle cx="976.26" cy="848.50" r="3.5"/><circle cx="983.05" cy="848.50" r="3.5"/><circle cx="989.85" cy="848.50" r="3.5"/><circle cx="996.64" cy="848.50" r="3.5"/><circle cx="1003.43" cy="848.50" r="3.5"/><circle cx="1010.22" cy="848.50" r="3.5"/><circle cx="1017.01" cy="848.50" r="3.5"/><circle cx="1023.81" cy="848.50" r="3.5"/><circle cx="1030.60" cy="848.50" r="3.5"/><circle cx="1037.39" cy="848.50" r="3.5"/><circle cx="1044.18" cy="848.50" r="3.5"/><circle cx="1050.97" cy="848.50" r="3.5"/><circle cx="1057.77" cy="848.50" r="3.5"/><circle cx="1064.56" cy="848.50" r="3.5"/><circle cx="1071.35" cy="848.50" r="3.5"/><circle cx="1078.14" cy="848.50" r="3.5"/><circle cx="1084.94" cy="848.50" r="3.5"/><circle cx="1091.73" cy="848.50" r="3.5"/><circle cx="1098.52" cy="848.50" r="3.5"/><circle cx="1105.31" cy="848.50" r="3.5"/><circle cx="1112.10" cy="848.50" r="3.5"/><circle cx="1118.90" cy="848.50" r="3.5"/><circle cx="1125.69" cy="848.50" r="3.5"/><circle cx="1132.48" cy="848.50" r="3.5"/><circle cx="1139.27" cy="848.50" r="3.5"/><circle cx="1146.06" cy="848.50" r="3.5"/><circle cx="1152.86" cy="848.50" r="3.5"/><circle cx="1159.65" cy="848.50" r="3.5"/><circle cx="1166.44" cy="848.50" r="3.5"/><circle cx="1173.23" cy="848.50" r="3.5"/><circle cx="1180.02" cy="848.50" r="3.5"/><circle cx="1186.82" cy="848.50" r="3.5"/><circle cx="1193.61" cy="848.50" r="3.5"/><circle cx="1200.40" cy="848.50" r="3.5"/><circle cx="1207.19" cy="848.50" r="3.5"/><circle cx="1213.98" cy="848.50" r="3.5"/><circle cx="1220.78" cy="848.50" r="3.5"/><circle cx="1227.57" cy="848.50" r="3.5"/><circle cx="1234.36" cy="848.50" r="3.5"/><circle cx="1241.15" cy="848.50" r="3.5"/><circle cx="1247.95" cy="848.50" r="3.5"/><circle cx="1254.74" cy="848.50" r="3.5"/><circle cx="1261.53" cy="848.50" r="3.5"/><circle cx="1268.32" cy="848.50" r="3.5"/><circle cx="1275.11" cy="848.50" r="3.5"/><circle cx="1281.91" cy="848.50" r="3.5"/><circle cx="1288.70" cy="848.50" r="3.5"/><circle cx="1295.49" cy="848.50" r="3.5"/><circle cx="1302.28" cy="848.50" r="3.5"/><circle cx="1309.07" cy="848.50" r="3.5"/><circle cx="1315.87" cy="848.50" r="3.5"/><circle cx="1322.66" cy="848.50" r="3.5"/><circle cx="1329.45" cy="848.50" r="3.5"/><circle cx="1336.24" cy="848.50" r="3.5"/><circle cx="1343.03" cy="848.50" r="3.5"/><circle cx="1349.83" cy="848.50" r="3.5"/><circle cx="1356.62" cy="848.50" r="3.5"/><circle cx="1363.41" cy="848.50" r="3.5"/><circle cx="1370.20" cy="848.50" r="3.5"/><circle cx="1376.99" cy="848.50" r="3.5"/><circle cx="1383.79" cy="848.50" r="3.5"/><circle cx="1390.58" cy="848.50" r="3.5"/><circle cx="1397.37" cy="848.50" r="3.5"/><circle cx="1404.16" cy="848.50" r="3.5"/><circle cx="1410.95" cy="848.50" r="3.5"/><circle cx="1417.75" cy="848.50" r="3.5"/><circle cx="1424.54" cy="848.50" r="3.5"/><circle cx="1431.33" cy="848.50" r="3.5"/><circle cx="1438.12" cy="848.50" r="3.5"/><circle cx="1444.92" cy="848.50" r="3.5"/><circle cx="1451.71" cy="848.50" r="3.5"/><circle cx="1458.50" cy="848.50" r="3.5"/><circle cx="1465.29" cy="848.50" r="3.5"/><circle cx="1472.08" cy="848.50" r="3.5"/><circle cx="1478.88" cy="848.50" r="3.5"/><circle cx="1485.67" cy="848.50" r="3.5"/><circle cx="1492.46" cy="848.50" r="3.5"/><circle cx="1499.25" cy="848.50" r="3.5"/><circle cx="1506.04" cy="848.50" r="3.5"/><circle cx="1512.84" cy="848.50" r="3.5"/><circle cx="1519.63" cy="848.50" r="3.5"/><circle cx="1526.42" cy="848.50" r="3.5"/><circle cx="1533.21" cy="848.50" r="3.5"/><circle cx="1540.00" cy="848.50" r="3.5"/><circle cx="1546.80" cy="848.50" r="3.5"/><circle cx="1553.59" cy="848.50" r="3.5"/><circle cx="1560.38" cy="848.50" r="3.5"/><circle cx="1567.17" cy="848.50" r="3.5"/><circle cx="1573.96" cy="848.50" r="3.5"/><circle cx="1580.76" cy="848.50" r="3.5"/><circle cx="1587.55" cy="848.50" r="3.5"/><circle cx="1594.34" cy="848.50" r="3.5"/><circle cx="1601.13" cy="848.50" r="3.5"/><circle cx="1607.93" cy="848.50" r="3.5"/><circle cx="1614.72" cy="848.50" r="3.5"/><circle cx="1621.51" cy="848.50" r="3.5"/><circle cx="1628.30" cy="848.50" r="3.5"/><circle cx="1635.09" cy="848.50" r="3.5"/><circle cx="1641.89" cy="848.50" r="3.5"/><circle cx="1648.68" cy="848.50" r="3.5"/><circle cx="1655.47" cy="848.50" r="3.5"/><circle cx="1662.26" cy="848.50" r="3.5"/><circle cx="1669.05" cy="848.50" r="3.5"/><circle cx="1675.85" cy="848.50" r="3.5"/><circle cx="1682.64" cy="848.50" r="3.5"/><circle cx="1689.43" cy="848.50" r="3.5"/><circle cx="1696.22" cy="848.50" r="3.5"/><circle cx="1703.01" cy="848.50" r="3.5"/><circle cx="1709.81" cy="848.50" r="3.5"/><circle cx="1716.60" cy="848.50" r="3.5"/><circle cx="1723.39" cy="848.50" r="3.5"/><circle cx="1730.18" cy="848.50" r="3.5"/><circle cx="1736.97" cy="848.50" r="3.5"/><circle cx="1743.77" cy="848.50" r="3.5"/><circle cx="1750.56" cy="848.50" r="3.5"/><circle cx="1757.35" cy="848.50" r="3.5"/><circle cx="1764.14" cy="848.50" r="3.5"/><circle cx="1770.93" cy="848.50" r="3.5"/><circle cx="1777.73" cy="848.50" r="3.5"/><circle cx="1784.52" cy="848.50" r="3.5"/><circle cx="1791.31" cy="848.50" r="3.5"/><circle cx="1798.10" cy="848.50" r="3.5"/><circle cx="1804.90" cy="848.50" r="3.5"/><circle cx="1811.69" cy="848.50" r="3.5"/><circle cx="1818.48" cy="848.50" r="3.5"/><circle cx="1825.27" cy="848.50" r="3.5"/><circle cx="1832.06" cy="848.50" r="3.5"/><circle cx="1838.86" cy="848.50" r="3.5"/><circle cx="1845.65" cy="678.90" r="3.5"/><circle cx="1852.44" cy="848.50" r="3.5"/><circle cx="1859.23" cy="848.50" r="3.5"/><circle cx="1866.02" cy="848.50" r="3.5"/><circle cx="1872.82" cy="848.50" r="3.5"/><circle cx="1879.61" cy="848.50" r="3.5"/><circle cx="1886.40" cy="848.50" r="3.5"/><circle cx="1893.19" cy="848.50" r="3.5"/><circle cx="1899.98" cy="848.50" r="3.5"/><circle cx="1906.78" cy="848.50" r="3.5"/></g><polyline points="772.50,848.50 779.29,848.50 786.08,848.50 792.88,848.50 799.67,848.50 806.46,848.50 813.25,848.50 820.04,848.50 826.84,848.50 833.63,848.50 840.42,848.50 847.21,848.50 854.00,848.50 860.80,848.50 867.59,848.50 874.38,848.50 881.17,848.50 887.97,848.50 894.76,848.50 901.55,848.50 908.34,848.50 915.13,848.50 921.93,848.50 928.72,848.50 935.51,848.50 942.30,848.50 949.09,848.50 955.89,848.50 962.68,848.50 969.47,848.50 976.26,848.50 983.05,848.50 989.85,848.50 996.64,848.50 1003.43,848.50 1010.22,848.50 1017.01,848.50 1023.81,848.50 1030.60,848.50 1037.39,848.50 1044.18,848.50 1050.97,848.50 1057.77,848.50 1064.56,848.50 1071.35,848.50 1078.14,848.50 1084.94,848.50 1091.73,848.50 1098.52,848.50 1105.31,848.50 1112.10,848.50 1118.90,848.50 1125.69,848.50 1132.48,848.50 1139.27,848.50 1146.06,848.50 1152.86,848.50 1159.65,848.50 1166.44,848.50 1173.23,848.50 1180.02,848.50 1186.82,848.50 1193.61,848.50 1200.40,848.50 1207.19,848.50 1213.98,848.50 1220.78,848.50 1227.57,848.50 1234.36,848.50 1241.15,848.50 1247.95,848.50 1254.74,848.50 1261.53,848.50 1268.32,848.50 1275.11,848.50 1281.91,848.50 1288.70,848.50 1295.49,848.50 1302.28,848.50 1309.07,848.50 1315.87,848.50 1322.66,848.50 1329.45,848.50 1336.24,848.50 1343.03,848.50 1349.83,848.50 1356.62,848.50 1363.41,848.50 1370.20,848.50 1376.99,848.50 1383.79,848.50 1390.58,848.50 1397.37,848.50 1404.16,848.50 1410.95,848.50 1417.75,848.50 1424.54,848.50 1431.33,848.50 1438.12,848.50 1444.92,848.50 1451.71,848.50 1458.50,848.50 1465.29,848.50 1472.08,848.50 1478.88,848.50 1485.67,848.50 1492.46,848.50 1499.25,848.50 1506.04,848.50 1512.84,848.50 1519.63,848.50 1526.42,848.50 1533.21,848.50 1540.00,848.50 1546.80,848.50 1553.59,848.50 1560.38,848.50 1567.17,848.50 1573.96,848.50 1580.76,848.50 1587.55,848.50 1594.34,848.50 1601.13,848.50 1607.93,848.50 1614.72,848.50 1621.51,848.50 1628.30,848.50 1635.09,848.50 1641.89,848.50 1648.68,848.50 1655.47,848.50 1662.26,848.50 1669.05,848.50 1675.85,848.50 1682.64,848.50 1689.43,848.50 1696.22,848.50 1703.01,848.50 1709.81,848.50 1716.60,848.50 1723.39,848.50 1730.18,848.50 1736.97,848.50 1743.77,848.50 1750.56,848.50 1757.35,848.50 1764.14,848.50 1770.93,848.50 1777.73,848.50 1784.52,848.50 1791.31,848.50 1798.10,848.50 1804.90,848.50 1811.69,848.50 1818.48,848.50 1825.27,848.50 1832.06,848.50 1838.86,848.50 1845.65,424.50 1852.44,848.50 1859.23,848.50 1866.02,848.50 1872.82,848.50 1879.61,848.50 1886.40,848.50 1893.19,848.50 1899.98,848.50 1906.78,848.50" fill="none" stroke="#36a2eb" stroke-width="3" stroke-linejoin="miter"/><g fill="#36a2eb"><circle cx="772.50" cy="848.50" r="3.5"/><circle cx="779.29" cy="848.50" r="3.5"/><circle cx="786.08" cy="848.50" r="3.5"/><circle cx="792.88" cy="848.50" r="3.5"/><circle cx="799.67" cy="848.50" r="3.5"/><circle cx="806.46" cy="848.50" r="3.5"/><circle cx="813.25" cy="848.50" r="3.5"/><circle cx="820.04" cy="848.50" r="3.5"/><circle cx="826.84" cy="848.50" r="3.5"/><circle cx="833.63" cy="848.50" r="3.5"/><circle cx="840.42" cy="848.50" r="3.5"/><circle cx="847.21" cy="848.50" r="3.5"/><circle cx="854.00" cy="848.50" r="3.5"/><circle cx="860.80" cy="848.50" r="3.5"/><circle cx="867.59" cy="848.50" r="3.5"/><circle cx="874.38" cy="848.50" r="3.5"/><circle cx="881.17" cy="848.50" r="3.5"/><circle cx="887.97" cy="848.50" r="3.5"/><circle cx="894.76" cy="848.50" r="3.5"/><circle cx="901.55" cy="848.50" r="3.5"/><circle cx="908.34" cy="848.50" r="3.5"/><circle cx="915.13" cy="848.50" r="3.5"/><circle cx="921.93" cy="848.50" r="3.5"/><circle cx="928.72" cy="848.50" r="3.5"/><circle cx="935.51" cy="848.50" r="3.5"/><circle cx="942.30" cy="848.50" r="3.5"/><circle cx="949.09" cy="848.50" r="3.5"/><circle cx="955.89" cy="848.50" r="3.5"/><circle cx="962.68" cy="848.50" r="3.5"/><circle cx="969.47" cy="848.50" r="3.5"/><circle cx="976.26" cy="848.50" r="3.5"/><circle cx="983.05" cy="848.50" r="3.5"/><circle cx="989.85" cy="848.50" r="3.5"/><circle cx="996.64" cy="848.50" r="3.5"/><circle cx="1003.43" cy="848.50" r="3.5"/><circle cx="1010.22" cy="848.50" r="3.5"/><circle cx="1017.01" cy="848.50" r="3.5"/><circle cx="1023.81" cy="848.50" r="3.5"/><circle cx="1030.60" cy="848.50" r="3.5"/><circle cx="1037.39" cy="848.50" r="3.5"/><circle cx="1044.18" cy="848.50" r="3.5"/><circle cx="1050.97" cy="848.50" r="3.5"/><circle cx="1057.77" cy="848.50" r="3.5"/><circle cx="1064.56" cy="848.50" r="3.5"/><circle cx="1071.35" cy="848.50" r="3.5"/><circle cx="1078.14" cy="848.50" r="3.5"/><circle cx="1084.94" cy="848.50" r="3.5"/><circle cx="1091.73" cy="848.50" r="3.5"/><circle cx="1098.52" cy="848.50" r="3.5"/><circle cx="1105.31" cy="848.50" r="3.5"/><circle cx="1112.10" cy="848.50" r="3.5"/><circle cx="1118.90" cy="848.50" r="3.5"/><circle cx="1125.69" cy="848.50" r="3.5"/><circle cx="1132.48" cy="848.50" r="3.5"/><circle cx="1139.27" cy="848.50" r="3.5"/><circle cx="1146.06" cy="848.50" r="3.5"/><circle cx="1152.86" cy="848.50" r="3.5"/><circle cx="1159.65" cy="848.50" r="3.5"/><circle cx="1166.44" cy="848.50" r="3.5"/><circle cx="1173.23" cy="848.50" r="3.5"/><circle cx="1180.02" cy="848.50" r="3.5"/><circle cx="1186.82" cy="848.50" r="3.5"/><circle cx="1193.61" cy="848.50" r="3.5"/><circle cx="1200.40" cy="848.50" r="3.5"/><circle cx="1207.19" cy="848.50" r="3.5"/><circle cx="1213.98" cy="848.50" r="3.5"/><circle cx="1220.78" cy="848.50" r="3.5"/><circle cx="1227.57" cy="848.50" r="3.5"/><circle cx="1234.36" cy="848.50" r="3.5"/><circle cx="1241.15" cy="848.50" r="3.5"/><circle cx="1247.95" cy="848.50" r="3.5"/><circle cx="1254.74" cy="848.50" r="3.5"/><circle cx="1261.53" cy="848.50" r="3.5"/><circle cx="1268.32" cy="848.50" r="3.5"/><circle cx="1275.11" cy="848.50" r="3.5"/><circle cx="1281.91" cy="848.50" r="3.5"/><circle cx="1288.70" cy="848.50" r="3.5"/><circle cx="1295.49" cy="848.50" r="3.5"/><circle cx="1302.28" cy="848.50" r="3.5"/><circle cx="1309.07" cy="848.50" r="3.5"/><circle cx="1315.87" cy="848.50" r="3.5"/><circle cx="1322.66" cy="848.50" r="3.5"/><circle cx="1329.45" cy="848.50" r="3.5"/><circle cx="1336.24" cy="848.50" r="3.5"/><circle cx="1343.03" cy="848.50" r="3.5"/><circle cx="1349.83" cy="848.50" r="3.5"/><circle cx="1356.62" cy="848.50" r="3.5"/><circle cx="1363.41" cy="848.50" r="3.5"/><circle cx="1370.20" cy="848.50" r="3.5"/><circle cx="1376.99" cy="848.50" r="3.5"/><circle cx="1383.79" cy="848.50" r="3.5"/><circle cx="1390.58" cy="848.50" r="3.5"/><circle cx="1397.37" cy="848.50" r="3.5"/><circle cx="1404.16" cy="848.50" r="3.5"/><circle cx="1410.95" cy="848.50" r="3.5"/><circle cx="1417.75" cy="848.50" r="3.5"/><circle cx="1424.54" cy="848.50" r="3.5"/><circle cx="1431.33" cy="848.50" r="3.5"/><circle cx="1438.12" cy="848.50" r="3.5"/><circle cx="1444.92" cy="848.50" r="3.5"/><circle cx="1451.71" cy="848.50" r="3.5"/><circle cx="1458.50" cy="848.50" r="3.5"/><circle cx="1465.29" cy="848.50" r="3.5"/><circle cx="1472.08" cy="848.50" r="3.5"/><circle cx="1478.88" cy="848.50" r="3.5"/><circle cx="1485.67" cy="848.50" r="3.5"/><circle cx="1492.46" cy="848.50" r="3.5"/><circle cx="1499.25" cy="848.50" r="3.5"/><circle cx="1506.04" cy="848.50" r="3.5"/><circle cx="1512.84" cy="848.50" r="3.5"/><circle cx="1519.63" cy="848.50" r="3.5"/><circle cx="1526.42" cy="848.50" r="3.5"/><circle cx="1533.21" cy="848.50" r="3.5"/><circle cx="1540.00" cy="848.50" r="3.5"/><circle cx="1546.80" cy="848.50" r="3.5"/><circle cx="1553.59" cy="848.50" r="3.5"/><circle cx="1560.38" cy="848.50" r="3.5"/><circle cx="1567.17" cy="848.50" r="3.5"/><circle cx="1573.96" cy="848.50" r="3.5"/><circle cx="1580.76" cy="848.50" r="3.5"/><circle cx="1587.55" cy="848.50" r="3.5"/><circle cx="1594.34" cy="848.50" r="3.5"/><circle cx="1601.13" cy="848.50" r="3.5"/><circle cx="1607.93" cy="848.50" r="3.5"/><circle cx="1614.72" cy="848.50" r="3.5"/><circle cx="1621.51" cy="848.50" r="3.5"/><circle cx="1628.30" cy="848.50" r="3.5"/><circle cx="1635.09" cy="848.50" r="3.5"/><circle cx="1641.89" cy="848.50" r="3.5"/><circle cx="1648.68" cy="848.50" r="3.5"/><circle cx="1655.47" cy="848.50" r="3.5"/><circle cx="1662.26" cy="848.50" r="3.5"/><circle cx="1669.05" cy="848.50" r="3.5"/><circle cx="1675.85" cy="848.50" r="3.5"/><circle cx="1682.64" cy="848.50" r="3.5"/><circle cx="1689.43" cy="848.50" r="3.5"/><circle cx="1696.22" cy="848.50" r="3.5"/><circle cx="1703.01" cy="848.50" r="3.5"/><circle cx="1709.81" cy="848.50" r="3.5"/><circle cx="1716.60" cy="848.50" r="3.5"/><circle cx="1723.39" cy="848.50" r="3.5"/><circle cx="1730.18" cy="848.50" r="3.5"/><circle cx="1736.97" cy="848.50" r="3.5"/><circle cx="1743.77" cy="848.50" r="3.5"/><circle cx="1750.56" cy="848.50" r="3.5"/><circle cx="1757.35" cy="848.50" r="3.5"/><circle cx="1764.14" cy="848.50" r="3.5"/><circle cx="1770.93" cy="848.50" r="3.5"/><circle cx="1777.73" cy="848.50" r="3.5"/><circle cx="1784.52" cy="848.50" r="3.5"/><circle cx="1791.31" cy="848.50" r="3.5"/><circle cx="1798.10" cy="848.50" r="3.5"/><circle cx="1804.90" cy="848.50" r="3.5"/><circle cx="1811.69" cy="848.50" r="3.5"/><circle cx="1818.48" cy="848.50" r="3.5"/><circle cx="1825.27" cy="848.50" r="3.5"/><circle cx="1832.06" cy="848.50" r="3.5"/><circle cx="1838.86" cy="848.50" r="3.5"/><circle cx="1845.65" cy="424.50" r="3.5"/><circle cx="1852.44" cy="848.50" r="3.5"/><circle cx="1859.23" cy="848.50" r="3.5"/><circle cx="1866.02" cy="848.50" r="3.5"/><circle cx="1872.82" cy="848.50" r="3.5"/><circle cx="1879.61" cy="848.50" r="3.5"/><circle cx="1886.40" cy="848.50" r="3.5"/><circle cx="1893.19" cy="848.50" r="3.5"/><circle cx="1899.98" cy="848.50" r="3.5"/><circle cx="1906.78" cy="848.50" r="3.5"/></g><polyline points="772.50,848.50 779.29,848.50 786.08,848.50 792.88,848.50 799.67,848.50 806.46,848.50 813.25,848.50 820.04,848.50 826.84,848.50 833.63,848.50 840.42,848.50 847.21,848.50 854.00,848.50 860.80,848.50 867.59,848.50 874.38,848.50 881.17,848.50 887.97,848.50 894.76,848.50 901.55,848.50 908.34,848.50 915.13,848.50 921.93,848.50 928.72,848.50 935.51,848.50 942.30,848.50 949.09,848.50 955.89,848.50 962.68,848.50 969.47,848.50 976.26,848.50 983.05,848.50 989.85,848.50 996.64,848.50 1003.43,848.50 1010.22,848.50 1017.01,848.50 1023.81,848.50 1030.60,848.50 1037.39,848.50 1044.18,848.50 1050.97,848.50 1057.77,848.50 1064.56,848.50 1071.35,848.50 1078.14,848.50 1084.94,848.50 1091.73,848.50 1098.52,848.50 1105.31,848.50 1112.10,848.50 1118.90,848.50 1125.69,848.50 1132.48,848.50 1139.27,848.50 1146.06,848.50 1152.86,848.50 1159.65,848.50 1166.44,848.50 1173.23,848.50 1180.02,848.50 1186.82,848.50 1193.61,848.50 1200.40,848.50 1207.19,848.50 1213.98,848.50 1220.78,848.50 1227.57,848.50 1234.36,848.50 1241.15,848.50 1247.95,848.50 1254.74,848.50 1261.53,848.50 1268.32,848.50 1275.11,848.50 1281.91,848.50 1288.70,848.50 1295.49,848.50 1302.28,848.50 1309.07,848.50 1315.87,848.50 1322.66,848.50 1329.45,848.50 1336.24,848.50 1343.03,848.50 1349.83,848.50 1356.62,848.50 1363.41,848.50 1370.20,848.50 1376.99,848.50 1383.79,848.50 1390.58,848.50 1397.37,848.50 1404.16,848.50 1410.95,848.50 1417.75,848.50 1424.54,848.50 1431.33,848.50 1438.12,848.50 1444.92,848.50 1451.71,848.50 1458.50,848.50 1465.29,848.50 1472.08,848.50 1478.88,848.50 1485.67,848.50 1492.46,848.50 1499.25,848.50 1506.04,848.50 1512.84,848.50 1519.63,848.50 1526.42,848.50 1533.21,848.50 1540.00,848.50 1546.80,848.50 1553.59,848.50 1560.38,848.50 1567.17,848.50 1573.96,848.50 1580.76,848.50 1587.55,848.50 1594.34,848.50 1601.13,848.50 1607.93,848.50 1614.72,848.50 1621.51,848.50 1628.30,848.50 1635.09,848.50 1641.89,848.50 1648.68,848.50 1655.47,848.50 1662.26,848.50 1669.05,848.50 1675.85,848.50 1682.64,848.50 1689.43,848.50 1696.22,848.50 1703.01,848.50 1709.81,848.50 1716.60,848.50 1723.39,848.50 1730.18,848.50 1736.97,848.50 1743.77,848.50 1750.56,848.50 1757.35,848.50 1764.14,848.50 1770.93,848.50 1777.73,848.50 1784.52,848.50 1791.31,848.50 1798.10,848.50 1804.90,848.50 1811.69,848.50 1818.48,848.50 1825.27,848.50 1832.06,848.50 1838.86,848.50 1845.65,424.50 1852.44,848.50 1859.23,848.50 1866.02,848.50 1872.82,848.50 1879.61,848.50 1886.40,848.50 1893.19,848.50 1899.98,848.50 1906.78,848.50" fill="none" stroke="#ff6384" stroke-width="3" stroke-linejoin="miter"/><g fill="#ff6384"><circle cx="772.50" cy="848.50" r="3.5"/><circle cx="779.29" cy="848.50" r="3.5"/><circle cx="786.08" cy="848.50" r="3.5"/><circle cx="792.88" cy="848.50" r="3.5"/><circle cx="799.67" cy="848.50" r="3.5"/><circle cx="806.46" cy="848.50" r="3.5"/><circle cx="813.25" cy="848.50" r="3.5"/><circle cx="820.04" cy="848.50" r="3.5"/><circle cx="826.84" cy="848.50" r="3.5"/><circle cx="833.63" cy="848.50" r="3.5"/><circle cx="840.42" cy="848.50" r="3.5"/><circle cx="847.21" cy="848.50" r="3.5"/><circle cx="854.00" cy="848.50" r="3.5"/><circle cx="860.80" cy="848.50" r="3.5"/><circle cx="867.59" cy="848.50" r="3.5"/><circle cx="874.38" cy="848.50" r="3.5"/><circle cx="881.17" cy="848.50" r="3.5"/><circle cx="887.97" cy="848.50" r="3.5"/><circle cx="894.76" cy="848.50" r="3.5"/><circle cx="901.55" cy="848.50" r="3.5"/><circle cx="908.34" cy="848.50" r="3.5"/><circle cx="915.13" cy="848.50" r="3.5"/><circle cx="921.93" cy="848.50" r="3.5"/><circle cx="928.72" cy="848.50" r="3.5"/><circle cx="935.51" cy="848.50" r="3.5"/><circle cx="942.30" cy="848.50" r="3.5"/><circle cx="949.09" cy="848.50" r="3.5"/><circle cx="955.89" cy="848.50" r="3.5"/><circle cx="962.68" cy="848.50" r="3.5"/><circle cx="969.47" cy="848.50" r="3.5"/><circle cx="976.26" cy="848.50" r="3.5"/><circle cx="983.05" cy="848.50" r="3.5"/><circle cx="989.85" cy="848.50" r="3.5"/><circle cx="996.64" cy="848.50" r="3.5"/><circle cx="1003.43" cy="848.50" r="3.5"/><circle cx="1010.22" cy="848.50" r="3.5"/><circle cx="1017.01" cy="848.50" r="3.5"/><circle cx="1023.81" cy="848.50" r="3.5"/><circle cx="1030.60" cy="848.50" r="3.5"/><circle cx="1037.39" cy="848.50" r="3.5"/><circle cx="1044.18" cy="848.50" r="3.5"/><circle cx="1050.97" cy="848.50" r="3.5"/><circle cx="1057.77" cy="848.50" r="3.5"/><circle cx="1064.56" cy="848.50" r="3.5"/><circle cx="1071.35" cy="848.50" r="3.5"/><circle cx="1078.14" cy="848.50" r="3.5"/><circle cx="1084.94" cy="848.50" r="3.5"/><circle cx="1091.73" cy="848.50" r="3.5"/><circle cx="1098.52" cy="848.50" r="3.5"/><circle cx="1105.31" cy="848.50" r="3.5"/><circle cx="1112.10" cy="848.50" r="3.5"/><circle cx="1118.90" cy="848.50" r="3.5"/><circle cx="1125.69" cy="848.50" r="3.5"/><circle cx="1132.48" cy="848.50" r="3.5"/><circle cx="1139.27" cy="848.50" r="3.5"/><circle cx="1146.06" cy="848.50" r="3.5"/><circle cx="1152.86" cy="848.50" r="3.5"/><circle cx="1159.65" cy="848.50" r="3.5"/><circle cx="1166.44" cy="848.50" r="3.5"/><circle cx="1173.23" cy="848.50" r="3.5"/><circle cx="1180.02" cy="848.50" r="3.5"/><circle cx="1186.82" cy="848.50" r="3.5"/><circle cx="1193.61" cy="848.50" r="3.5"/><circle cx="1200.40" cy="848.50" r="3.5"/><circle cx="1207.19" cy="848.50" r="3.5"/><circle cx="1213.98" cy="848.50" r="3.5"/><circle cx="1220.78" cy="848.50" r="3.5"/><circle cx="1227.57" cy="848.50" r="3.5"/><circle cx="1234.36" cy="848.50" r="3.5"/><circle cx="1241.15" cy="848.50" r="3.5"/><circle cx="1247.95" cy="848.50" r="3.5"/><circle cx="1254.74" cy="848.50" r="3.5"/><circle cx="1261.53" cy="848.50" r="3.5"/><circle cx="1268.32" cy="848.50" r="3.5"/><circle cx="1275.11" cy="848.50" r="3.5"/><circle cx="1281.91" cy="848.50" r="3.5"/><circle cx="1288.70" cy="848.50" r="3.5"/><circle cx="1295.49" cy="848.50" r="3.5"/><circle cx="1302.28" cy="848.50" r="3.5"/><circle cx="1309.07" cy="848.50" r="3.5"/><circle cx="1315.87" cy="848.50" r="3.5"/><circle cx="1322.66" cy="848.50" r="3.5"/><circle cx="1329.45" cy="848.50" r="3.5"/><circle cx="1336.24" cy="848.50" r="3.5"/><circle cx="1343.03" cy="848.50" r="3.5"/><circle cx="1349.83" cy="848.50" r="3.5"/><circle cx="1356.62" cy="848.50" r="3.5"/><circle cx="1363.41" cy="848.50" r="3.5"/><circle cx="1370.20" cy="848.50" r="3.5"/><circle cx="1376.99" cy="848.50" r="3.5"/><circle cx="1383.79" cy="848.50" r="3.5"/><circle cx="1390.58" cy="848.50" r="3.5"/><circle cx="1397.37" cy="848.50" r="3.5"/><circle cx="1404.16" cy="848.50" r="3.5"/><circle cx="1410.95" cy="848.50" r="3.5"/><circle cx="1417.75" cy="848.50" r="3.5"/><circle cx="1424.54" cy="848.50" r="3.5"/><circle cx="1431.33" cy="848.50" r="3.5"/><circle cx="1438.12" cy="848.50" r="3.5"/><circle cx="1444.92" cy="848.50" r="3.5"/><circle cx="1451.71" cy="848.50" r="3.5"/><circle cx="1458.50" cy="848.50" r="3.5"/><circle cx="1465.29" cy="848.50" r="3.5"/><circle cx="1472.08" cy="848.50" r="3.5"/><circle cx="1478.88" cy="848.50" r="3.5"/><circle cx="1485.67" cy="848.50" r="3.5"/><circle cx="1492.46" cy="848.50" r="3.5"/><circle cx="1499.25" cy="848.50" r="3.5"/><circle cx="1506.04" cy="848.50" r="3.5"/><circle cx="1512.84" cy="848.50" r="3.5"/><circle cx="1519.63" cy="848.50" r="3.5"/><circle cx="1526.42" cy="848.50" r="3.5"/><circle cx="1533.21" cy="848.50" r="3.5"/><circle cx="1540.00" cy="848.50" r="3.5"/><circle cx="1546.80" cy="848.50" r="3.5"/><circle cx="1553.59" cy="848.50" r="3.5"/><circle cx="1560.38" cy="848.50" r="3.5"/><circle cx="1567.17" cy="848.50" r="3.5"/><circle cx="1573.96" cy="848.50" r="3.5"/><circle cx="1580.76" cy="848.50" r="3.5"/><circle cx="1587.55" cy="848.50" r="3.5"/><circle cx="1594.34" cy="848.50" r="3.5"/><circle cx="1601.13" cy="848.50" r="3.5"/><circle cx="1607.93" cy="848.50" r="3.5"/><circle cx="1614.72" cy="848.50" r="3.5"/><circle cx="1621.51" cy="848.50" r="3.5"/><circle cx="1628.30" cy="848.50" r="3.5"/><circle cx="1635.09" cy="848.50" r="3.5"/><circle cx="1641.89" cy="848.50" r="3.5"/><circle cx="1648.68" cy="848.50" r="3.5"/><circle cx="1655.47" cy="848.50" r="3.5"/><circle cx="1662.26" cy="848.50" r="3.5"/><circle cx="1669.05" cy="848.50" r="3.5"/><circle cx="1675.85" cy="848.50" r="3.5"/><circle cx="1682.64" cy="848.50" r="3.5"/><circle cx="1689.43" cy="848.50" r="3.5"/><circle cx="1696.22" cy="848.50" r="3.5"/><circle cx="1703.01" cy="848.50" r="3.5"/><circle cx="1709.81" cy="848.50" r="3.5"/><circle cx="1716.60" cy="848.50" r="3.5"/><circle cx="1723.39" cy="848.50" r="3.5"/><circle cx="1730.18" cy="848.50" r="3.5"/><circle cx="1736.97" cy="848.50" r="3.5"/><circle cx="1743.77" cy="848.50" r="3.5"/><circle cx="1750.56" cy="848.50" r="3.5"/><circle cx="1757.35" cy="848.50" r="3.5"/><circle cx="1764.14" cy="848.50" r="3.5"/><circle cx="1770.93" cy="848.50" r="3.5"/><circle cx="1777.73" cy="848.50" r="3.5"/><circle cx="1784.52" cy="848.50" r="3.5"/><circle cx="1791.31" cy="848.50" r="3.5"/><circle cx="1798.10" cy="848.50" r="3.5"/><circle cx="1804.90" cy="848.50" r="3.5"/><circle cx="1811.69" cy="848.50" r="3.5"/><circle cx="1818.48" cy="848.50" r="3.5"/><circle cx="1825.27" cy="848.50" r="3.5"/><circle cx="1832.06" cy="848.50" r="3.5"/><circle cx="1838.86" cy="848.50" r="3.5"/><circle cx="1845.65" cy="424.50" r="3.5"/><circle cx="1852.44" cy="848.50" r="3.5"/><circle cx="1859.23" cy="848.50" r="3.5"/><circle cx="1866.02" cy="848.50" r="3.5"/><circle cx="1872.82" cy="848.50" r="3.5"/><circle cx="1879.61" cy="848.50" r="3.5"/><circle cx="1886.40" cy="848.50" r="3.5"/><circle cx="1893.19" cy="848.50" r="3.5"/><circle cx="1899.98" cy="848.50" r="3.5"/><circle cx="1906.78" cy="848.50" r="3.5"/></g></svg></body></html>
